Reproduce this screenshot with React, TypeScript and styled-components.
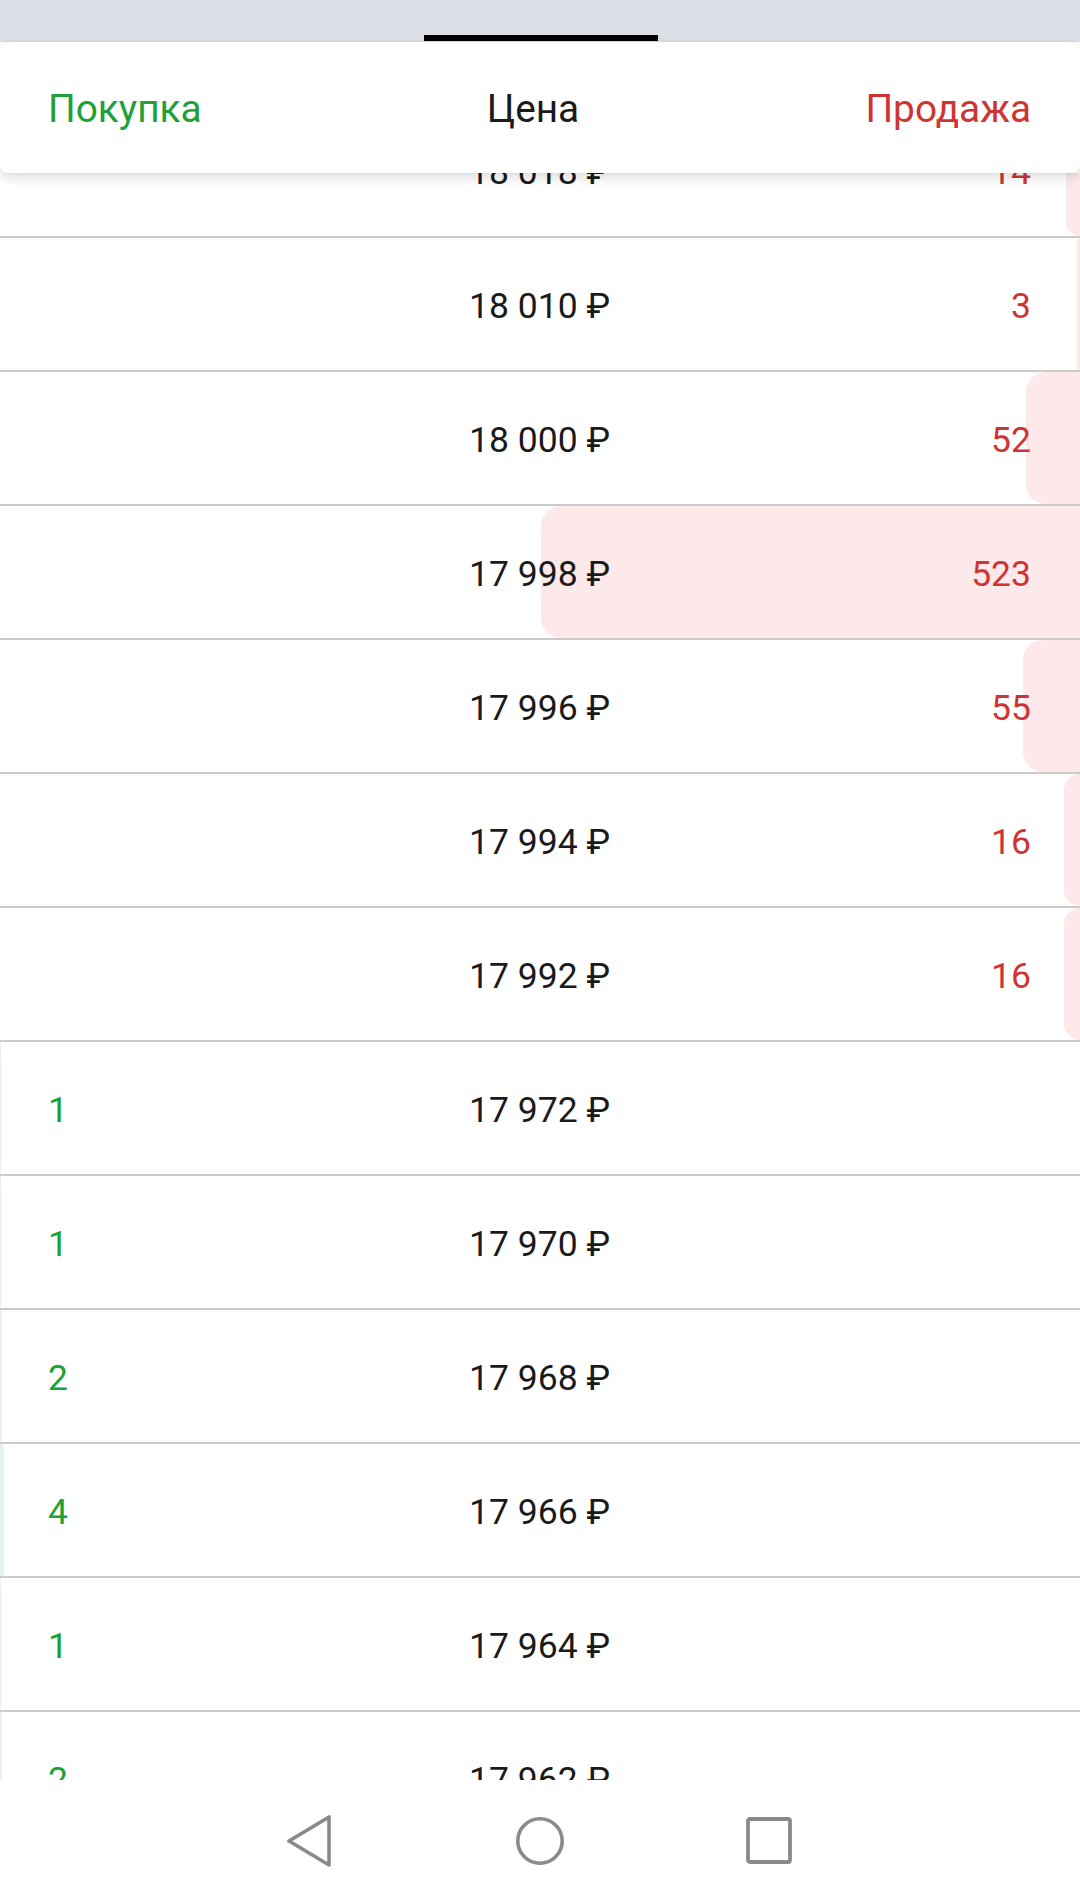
import React from "react";
import styled, { createGlobalStyle } from "styled-components";

const GlobalStyle = createGlobalStyle`
  html, body { margin: 0; padding: 0; background: #ffffff; }
  body { font-family: Roboto, "Noto Sans", "Liberation Sans", sans-serif; }
  * { box-sizing: border-box; }
`;

type Side = "ask" | "bid";
interface Level { price: string; qty: number; side: Side; }

const levels: Level[] = [
  { price: "18\u00a0018\u00a0₽", qty: 14, side: "ask" },
  { price: "18\u00a0010\u00a0₽", qty: 3, side: "ask" },
  { price: "18\u00a0000\u00a0₽", qty: 52, side: "ask" },
  { price: "17\u00a0998\u00a0₽", qty: 523, side: "ask" },
  { price: "17\u00a0996\u00a0₽", qty: 55, side: "ask" },
  { price: "17\u00a0994\u00a0₽", qty: 16, side: "ask" },
  { price: "17\u00a0992\u00a0₽", qty: 16, side: "ask" },
  { price: "17\u00a0972\u00a0₽", qty: 1, side: "bid" },
  { price: "17\u00a0970\u00a0₽", qty: 1, side: "bid" },
  { price: "17\u00a0968\u00a0₽", qty: 2, side: "bid" },
  { price: "17\u00a0966\u00a0₽", qty: 4, side: "bid" },
  { price: "17\u00a0964\u00a0₽", qty: 1, side: "bid" },
  { price: "17\u00a0962\u00a0₽", qty: 2, side: "bid" },
];

const GREEN = "#21a038";
const RED = "#cf3434";

const Screen = styled.div`
  width: 1080px;
  height: 1902px;
  display: flex;
  flex-direction: column;
  overflow: hidden;
  background: #ffffff;
`;

const Backdrop = styled.div`
  height: 42px;
  flex: none;
  background: #dcdfe5;
  display: flex;
  justify-content: center;
  align-items: flex-end;
  padding-bottom: 1px;
  padding-left: 2px;
`;

const Handle = styled.div`
  width: 234px;
  height: 6px;
  background: #000000;
`;

const Sheet = styled.div`
  flex: 1;
  display: flex;
  flex-direction: column;
  min-height: 0;
  background: #ffffff;
`;

const Grid = styled.div`
  display: grid;
  grid-template-columns: 1fr auto 1fr;
  align-items: center;
  padding: 0 49px 0 48px;
`;

const Header = styled(Grid)`
  position: relative;
  z-index: 2;
  height: 131px;
  flex: none;
  background: #ffffff;
  border-radius: 8px;
  box-shadow: 0 5px 12px rgba(0, 0, 0, 0.13), 0 0 3px rgba(0, 0, 0, 0.06);
  font-size: 38.8px;
  padding-top: 3px;
`;

const HeadCell = styled.div<{ $color: string; $align: "left" | "center" | "right"; $shift?: number }>`
  color: ${(p) => p.$color};
  text-align: ${(p) => p.$align};
  margin-right: ${(p) => p.$shift ?? 0}px;
  line-height: 1;
`;

const Viewport = styled.div`
  flex: 1;
  min-height: 0;
  overflow: hidden;
`;

const List = styled.div`
  margin-top: -69px;
`;

const Row = styled(Grid)`
  position: relative;
  height: 134px;
  border-bottom: 2px solid #cbcbcb;
  font-size: 35.5px;
  line-height: 1;
  padding-top: 6px;
`;

const DepthBar = styled.div<{ $side: Side }>`
  position: absolute;
  top: 0;
  bottom: 0;
  ${(p) =>
    p.$side === "ask"
      ? `right: 0; background: #fde9e9; border-radius: 20px 0 0 20px;`
      : `left: 0; background: #e3f3e6; border-radius: 0 20px 20px 0;`}
`;

const Qty = styled.div<{ $side: Side }>`
  position: relative;
  color: ${(p) => (p.$side === "ask" ? RED : GREEN)};
  text-align: ${(p) => (p.$side === "ask" ? "right" : "left")};
  grid-column: ${(p) => (p.$side === "ask" ? 3 : 1)};
  grid-row: 1;
`;

const Price = styled.div`
  position: relative;
  color: #1a1a1a;
  grid-column: 2;
  grid-row: 1;
  white-space: nowrap;
`;

const NavBar = styled.div`
  height: 122px;
  flex: none;
  background: #ffffff;
  display: flex;
  justify-content: center;
  align-items: center;
`;

const NavSlot = styled.div`
  width: 230px;
  display: flex;
  justify-content: center;
  align-items: center;
`;

const NAV = "#8a8a8a";

export default function App() {
  return (
    <>
      <GlobalStyle />
      <Screen>
        <Backdrop>
          <Handle />
        </Backdrop>
        <Sheet>
          <Header>
            <HeadCell $color={GREEN} $align="left">Покупка</HeadCell>
            <HeadCell $color="#1a1a1a" $align="center" $shift={13}>Цена</HeadCell>
            <HeadCell $color={RED} $align="right">Продажа</HeadCell>
          </Header>
          <Viewport>
            <List>
              {levels.map((l, i) => (
                <Row key={i}>
                  <DepthBar $side={l.side} style={{ width: `${l.qty * 1.03}px` }} />
                  <Price>{l.price}</Price>
                  <Qty $side={l.side}>{l.qty}</Qty>
                </Row>
              ))}
            </List>
          </Viewport>
          <NavBar>
            <NavSlot>
              <svg width="48" height="52" viewBox="0 0 48 52" fill="none">
                <path d="M43 2 L43 50 L3 26 Z" stroke={NAV} strokeWidth="3.6" strokeLinejoin="round" />
              </svg>
            </NavSlot>
            <NavSlot>
              <svg width="52" height="52" viewBox="0 0 52 52" fill="none">
                <circle cx="26" cy="26" r="22.2" stroke={NAV} strokeWidth="3.6" />
              </svg>
            </NavSlot>
            <NavSlot>
              <svg width="50" height="50" viewBox="0 0 50 50" fill="none">
                <rect x="3" y="3" width="42" height="43" rx="2" stroke={NAV} strokeWidth="3.8" />
              </svg>
            </NavSlot>
          </NavBar>
        </Sheet>
      </Screen>
    </>
  );
}
